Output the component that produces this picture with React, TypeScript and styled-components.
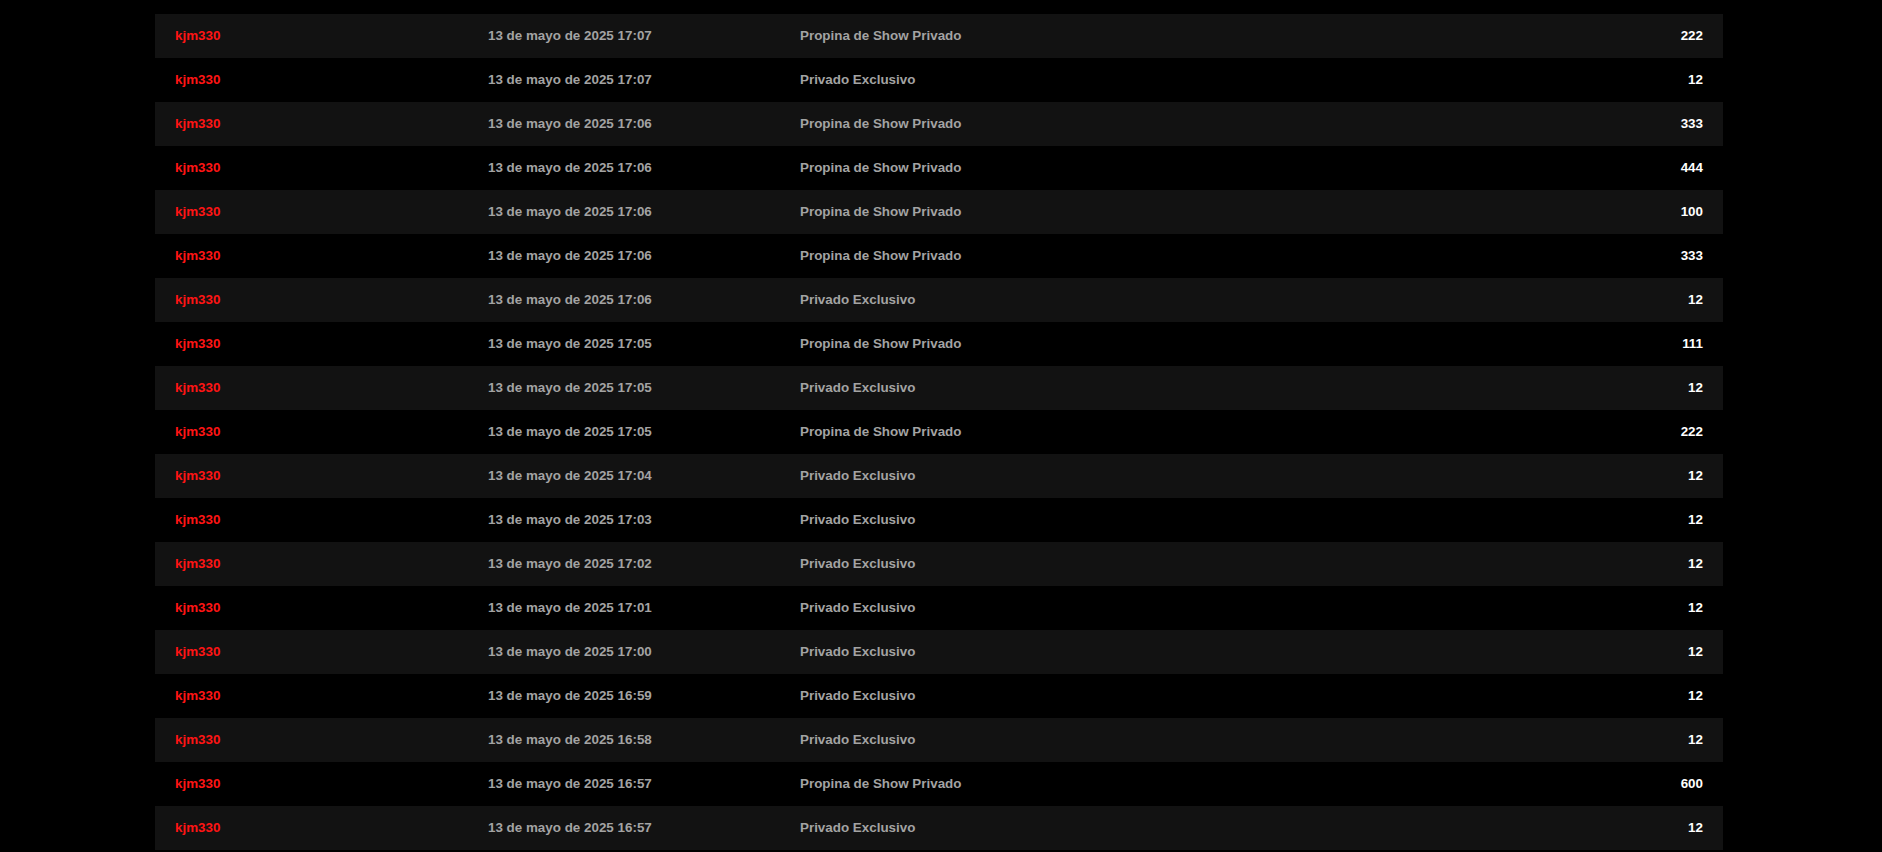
import React from "react";
import styled, { createGlobalStyle } from "styled-components";

const GlobalStyle = createGlobalStyle`
  html, body {
    margin: 0;
    padding: 0;
    background: #000;
  }
  body {
    font-family: "Liberation Sans", Arial, sans-serif;
  }
`;

const Page = styled.div`
  background: #000;
  min-height: 852px;
  padding: 14px 159px 0 155px;
  box-sizing: border-box;
`;

const Table = styled.table`
  width: 100%;
  border-collapse: collapse;
  table-layout: fixed;
  font-size: 13.4px;
  font-weight: 700;
`;

const Row = styled.tr<{ $striped: boolean }>`
  height: 44px;
  background: ${(p) => (p.$striped ? "#121212" : "#000")};
`;

const Cell = styled.td<{ $tone: "name" | "muted" | "amount"; $align?: "left" | "right" }>`
  padding: 0 20px 2px;
  text-align: ${(p) => p.$align ?? "left"};
  color: ${(p) =>
    p.$tone === "name" ? "#ff1414" : p.$tone === "amount" ? "#ffffff" : "#a3a3a3"};
  white-space: nowrap;
  vertical-align: middle;
`;

const data: [string, string, string][] = [
  ["17:07", "Propina de Show Privado", "222"],
  ["17:07", "Privado Exclusivo", "12"],
  ["17:06", "Propina de Show Privado", "333"],
  ["17:06", "Propina de Show Privado", "444"],
  ["17:06", "Propina de Show Privado", "100"],
  ["17:06", "Propina de Show Privado", "333"],
  ["17:06", "Privado Exclusivo", "12"],
  ["17:05", "Propina de Show Privado", "111"],
  ["17:05", "Privado Exclusivo", "12"],
  ["17:05", "Propina de Show Privado", "222"],
  ["17:04", "Privado Exclusivo", "12"],
  ["17:03", "Privado Exclusivo", "12"],
  ["17:02", "Privado Exclusivo", "12"],
  ["17:01", "Privado Exclusivo", "12"],
  ["17:00", "Privado Exclusivo", "12"],
  ["16:59", "Privado Exclusivo", "12"],
  ["16:58", "Privado Exclusivo", "12"],
  ["16:57", "Propina de Show Privado", "600"],
  ["16:57", "Privado Exclusivo", "12"],
];

export default function App() {
  return (
    <>
      <GlobalStyle />
      <Page>
        <Table>
          <colgroup>
            <col style={{ width: "313px" }} />
            <col style={{ width: "312px" }} />
            <col />
            <col style={{ width: "200px" }} />
          </colgroup>
          <tbody>
            {data.map(([time, type, amount], i) => (
              <Row key={i} $striped={i % 2 === 0}>
                <Cell $tone="name">kjm330</Cell>
                <Cell $tone="muted">13 de mayo de 2025 {time}</Cell>
                <Cell $tone="muted">{type}</Cell>
                <Cell $tone="amount" $align="right">
                  {amount}
                </Cell>
              </Row>
            ))}
          </tbody>
        </Table>
      </Page>
    </>
  );
}
